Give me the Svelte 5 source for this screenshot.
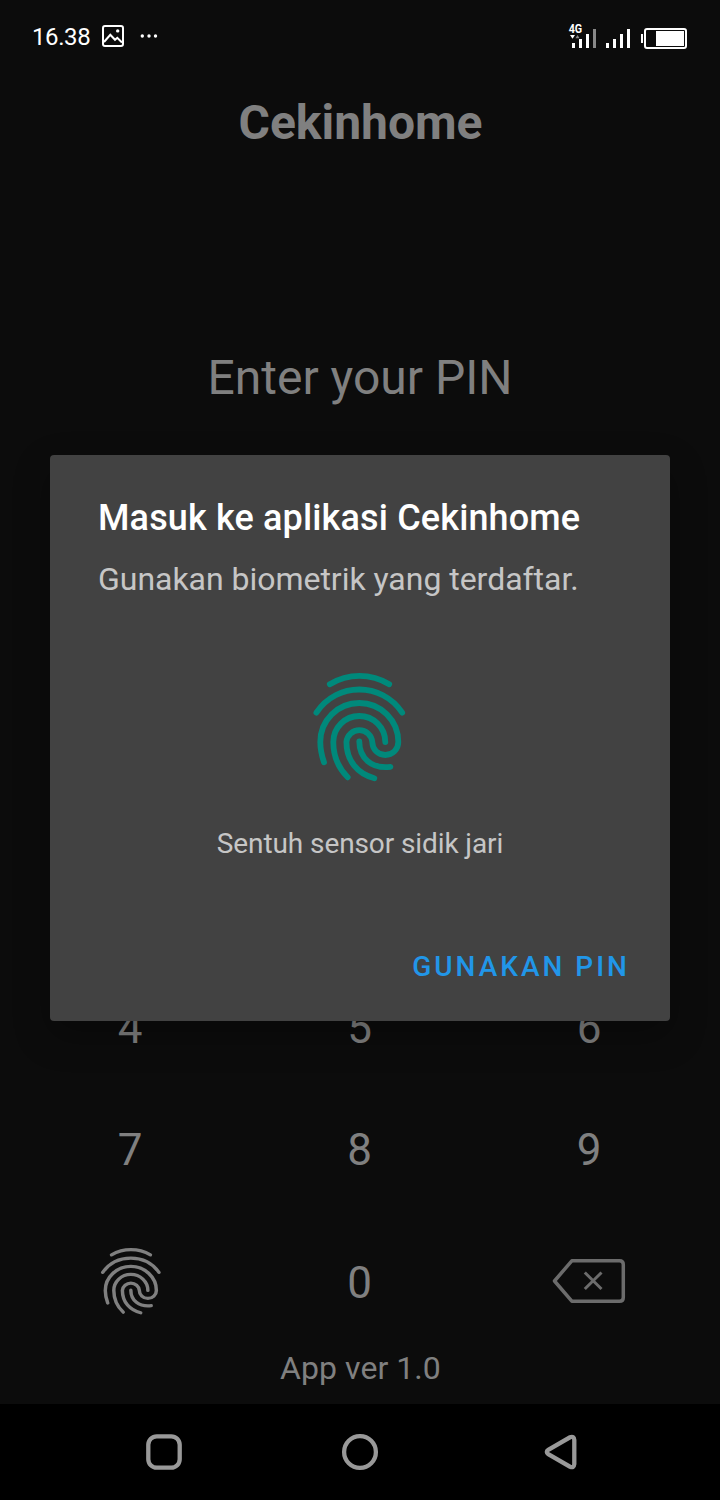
<script>
  const rows = [['4', '5', '6'], ['7', '8', '9']];
</script>

{#snippet fingerprint(stroke)}
  <g fill="none" stroke="currentColor" stroke-width={stroke} stroke-linecap="round" stroke-linejoin="round">
    <path d="M29.8 24.2C48 13 71 13 89.2 24.2" />
    <path d="M16.4 52.6C37 21.8 81.500 21.800 102.200 52.600" />
    <path d="M24 102.300C21.500 95 20.300 89 20.300 82A39 39 0 0 1 98.300 82A13 13 0 0 1 72.300 82A13 13 0 0 0 46.400 82C46.400 101 58 114 74.300 118.200" />
    <path d="M85.300 82A26 26 0 0 0 33.300 82C33.300 96 38 107.500 47.700 117.300" />
    <path d="M59.300 81.500C59.300 98 71.500 109 90.400 106.800" />
  </g>
{/snippet}

<main class="phone">
  <header class="status">
    <span class="time">16.38</span>
    <svg class="picture" width="24" height="24" viewBox="0 0 24 24">
      <rect x="2" y="2" width="20" height="20" rx="2" fill="none" stroke="#fff" stroke-width="2" />
      <path d="M3 18L9.300 10.800L14 15.800L16.300 13.800L21 18.500" fill="none" stroke="#fff" stroke-width="2" />
      <circle cx="16.700" cy="6.900" r="1.700" fill="#fff" />
    </svg>
    <svg class="more" width="20" height="6" viewBox="0 0 20 6" fill="#fff">
      <circle cx="3.300" cy="3" r="1.700" /><circle cx="10" cy="3" r="1.700" /><circle cx="16.500" cy="3" r="1.700" />
    </svg>
    <svg class="signals" width="120" height="30" viewBox="568 22 120 30" fill="#fff">
      <text x="568.700" y="32.500" font-size="12" font-weight="700" textLength="13.500" lengthAdjust="spacingAndGlyphs">4G</text>
      <path d="M570 35h5l-2.500 3.800z" />
      <path d="M575.500 38.300h4l-2-3.300z" fill="#888" />
      <rect x="572" y="43" width="3" height="5" />
      <rect x="579" y="39" width="3" height="9" />
      <rect x="586" y="34" width="3" height="14" />
      <rect x="593" y="29" width="3" height="19" fill="#888" />
      <rect x="606" y="43" width="3" height="5" />
      <rect x="613" y="39" width="3" height="9" />
      <rect x="620" y="34" width="3" height="14" />
      <rect x="627" y="29" width="3" height="19" />
      <rect x="641" y="34" width="2" height="9" />
      <rect x="645" y="29" width="41" height="19" rx="2" fill="none" stroke="#fff" stroke-width="2" />
      <rect x="656" y="31" width="28" height="15" />
    </svg>
  </header>

  <h1>Cekinhome</h1>
  <h2>Enter your PIN</h2>

  <section class="pad">
    {#each rows as row}
      {#each row as digit}
        <span class="key">{digit}</span>
      {/each}
    {/each}
    <span class="key icon">
      <svg class="small-print" width="78.600" height="80" viewBox="0 0 120 130" preserveAspectRatio="none">{@render fingerprint(5.3)}</svg>
    </span>
    <span class="key">0</span>
    <span class="key icon">
      <svg width="76" height="48" viewBox="551 1257 76 48" fill="none" stroke="#6c6c6c" stroke-linejoin="round">
        <path d="M554.500 1281L571.800 1260.800H619.500Q623.300 1260.800 623.300 1264.600V1297.400Q623.300 1301.200 619.500 1301.200H571.800Z" stroke-width="3.500" />
        <path d="M584.800 1272.500L601.500 1289M601.500 1272.500L584.800 1289" stroke-width="3" />
      </svg>
    </span>
  </section>
  <p class="version">App ver 1.0</p>

  <nav>
    <svg width="40" height="40" viewBox="0 0 40 40"><rect x="4.300" y="4.300" width="31.400" height="31.400" rx="8.500" /></svg>
    <svg width="40" height="40" viewBox="0 0 40 40"><circle cx="20" cy="20" r="15.900" /></svg>
    <svg width="40" height="40" viewBox="0 0 40 40"><path d="M12.300 17.800Q9.300 20 12.300 22.200L34 34.700Q38 36.200 38.300 32.200V7.800Q38 3.800 34 5.300Z" /></svg>
  </nav>

  <div class="dialog" role="dialog" aria-labelledby="dialog-title">
    <h3 id="dialog-title">Masuk ke aplikasi Cekinhome</h3>
    <p class="subtitle">Gunakan biometrik yang terdaftar.</p>
    <svg class="print" width="120" height="130" viewBox="0 0 120 130">{@render fingerprint(5.8)}</svg>
    <p class="hint">Sentuh sensor sidik jari</p>
    <button>GUNAKAN PIN</button>
  </div>
</main>

<style>
  :global(body) { margin: 0; background: #0c0c0c; }
  .phone {
    position: relative;
    display: flex;
    flex-direction: column;
    width: 720px;
    height: 1500px;
    overflow: hidden;
    background: #0c0c0c;
    color: #808080;
    font-family: Roboto, sans-serif;
  }
  h1, h2, h3, p { margin: 0; font-weight: 400; white-space: nowrap; }
  svg { display: block; flex: none; overflow: visible; }
  .status {
    display: flex;
    align-items: center;
    box-sizing: border-box;
    height: 74px;
    padding: 0 32px;
    color: #fff;
  }
  .time { width: 69px; font-size: 24px; line-height: 28px; letter-spacing: -0.4px; }
  .picture { margin-top: -2px; }
  .more { margin: -2px 0 0 14px; }
  .signals { margin-left: auto; }
  h1 {
    margin-top: 19px;
    font-size: 48px;
    font-weight: 700;
    line-height: 60px;
    text-align: center;
    padding-left: 1px;
  }
  h2 { margin-top: 195px; font-size: 48px; line-height: 60px; text-align: center; }
  .pad {
    display: grid;
    grid-template-columns: 230px 229px 230px;
    grid-template-rows: 121px 123px 143px;
    margin: 559px 15px 0;
  }
  .key {
    display: flex;
    align-items: center;
    justify-content: center;
    font-size: 44px;
    line-height: 50px;
  }
  .icon { padding-bottom: 4px; }
  .small-print { margin: -1px 0 0 3px; }
  .version {
    margin-top: -6px;
    padding-left: 1px;
    font-size: 32px;
    line-height: 40px;
    text-align: center;
    letter-spacing: 0.05px;
  }
  nav {
    display: flex;
    align-items: center;
    justify-content: space-between;
    box-sizing: border-box;
    height: 96px;
    margin-top: auto;
    padding: 0 144px;
    background: #000;
  }
  nav svg { fill: none; stroke: #999; stroke-width: 4.3; }
  .dialog {
    position: absolute;
    top: 455px;
    left: 50px;
    display: flex;
    flex-direction: column;
    box-sizing: border-box;
    width: 620px;
    height: 566px;
    padding: 41px 40px 0 48px;
    border-radius: 4px;
    background: #424242;
    box-shadow: 0 14px 36px rgba(0, 0, 0, 0.3);
  }
  h3 { color: #fff; font-size: 36px; font-weight: 500; line-height: 44px; letter-spacing: 0.14px; }
  .subtitle { margin-top: 19px; color: #c6c6c6; font-size: 32px; line-height: 40px; letter-spacing: -0.03px; }
  .print { margin: 61px 0 0 202px; color: #00897b; }
  .hint {
    margin: 36px 0 0 -8px;
    color: #c6c6c6;
    font-size: 28px;
    line-height: 36px;
    letter-spacing: -0.1px;
    text-align: center;
  }
  button {
    align-self: flex-end;
    margin-top: 85px;
    padding: 0;
    border: 0;
    background: none;
    color: #2196e8;
    font: 500 28px/40px Roboto, sans-serif;
    letter-spacing: 3px;
  }
</style>
